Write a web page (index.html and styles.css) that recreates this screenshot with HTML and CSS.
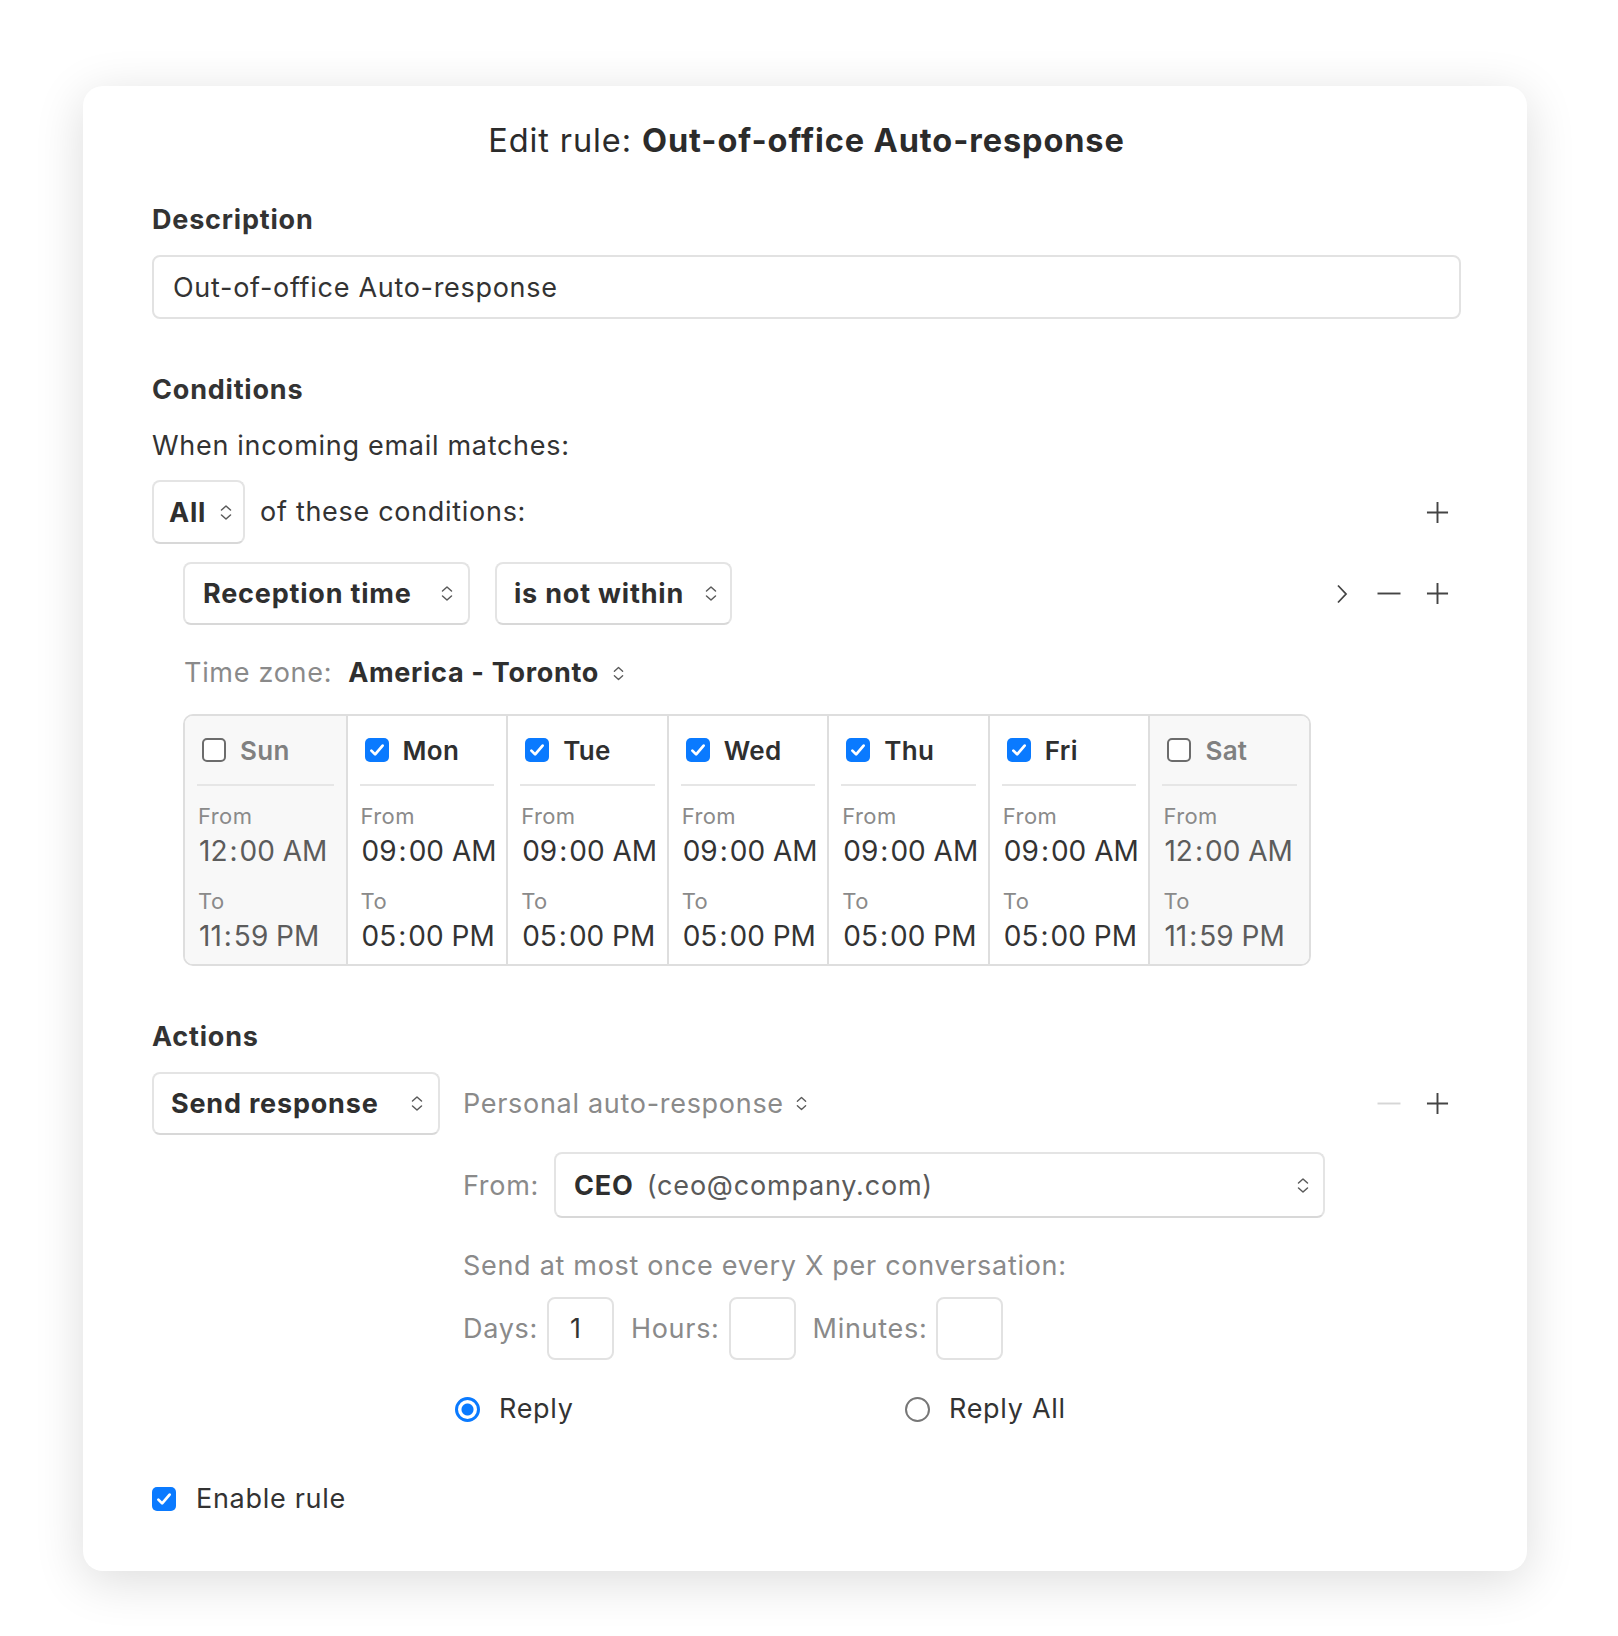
FILE: index.html
```html
<!DOCTYPE html>
<html>
<head>
    <meta charset="UTF-8">
    <title>Edit rule</title>
    <link rel="stylesheet" href="styles.css">
</head>
<body>
<div class="page">
    <div class="card">
        <h1 class="title">Edit rule: <b>Out-of-office Auto-response</b></h1>

        <div class="label first">Description</div>
        <div class="input">Out-of-office Auto-response</div>

        <div class="label section">Conditions</div>
        <div class="text when">When incoming email matches:</div>

        <div class="row match-row">
            <div class="select select-all">All
                <svg class="updown" viewBox="0 0 12 18"><path d="M1.5 6.5L6 2.5l4.5 4M1.5 11.5L6 15.5l4.5-4"/></svg>
            </div>
            <span class="text">of these conditions:</span>
            <span class="spacer"></span>
            <div class="tools">
                <svg class="icon plus" viewBox="0 0 24 24"><path d="M12 1v22M1 12h22"/></svg>
            </div>
        </div>

        <div class="row cond-row">
            <div class="select select-field">Reception time
                <svg class="updown" viewBox="0 0 12 18"><path d="M1.5 6.5L6 2.5l4.5 4M1.5 11.5L6 15.5l4.5-4"/></svg>
            </div>
            <div class="select select-op">is not within
                <svg class="updown" viewBox="0 0 12 18"><path d="M1.5 6.5L6 2.5l4.5 4M1.5 11.5L6 15.5l4.5-4"/></svg>
            </div>
            <span class="spacer"></span>
            <div class="tools">
                <svg class="icon chev" viewBox="0 0 12 20"><path d="M2 1.5l8 8.5-8 8.5"/></svg>
                <svg class="icon minus" viewBox="0 0 26 24"><path d="M1 12h24"/></svg>
                <svg class="icon plus" viewBox="0 0 24 24"><path d="M12 1v22M1 12h22"/></svg>
            </div>
        </div>

        <div class="tz">
            <span class="muted">Time zone:</span>
            <b>America - Toronto</b>
            <svg class="updown small" viewBox="0 0 12 18"><path d="M1.5 6.5L6 2.5l4.5 4M1.5 11.5L6 15.5l4.5-4"/></svg>
        </div>

        <div class="days">
            <div class="day off">
                <div class="day-head"><span class="check"></span>Sun</div>
                <div class="small-label">From</div>
                <div class="time">12<span class="colon">:</span>00 AM</div>
                <div class="small-label">To</div>
                <div class="time">11<span class="colon">:</span>59 PM</div>
            </div>
            <div class="day">
                <div class="day-head"><span class="check on"><svg viewBox="0 0 16 16"><path d="M3.5 8.5l3 3 6-7"/></svg></span>Mon</div>
                <div class="small-label">From</div>
                <div class="time">09<span class="colon">:</span>00 AM</div>
                <div class="small-label">To</div>
                <div class="time">05<span class="colon">:</span>00 PM</div>
            </div>
            <div class="day">
                <div class="day-head"><span class="check on"><svg viewBox="0 0 16 16"><path d="M3.5 8.5l3 3 6-7"/></svg></span>Tue</div>
                <div class="small-label">From</div>
                <div class="time">09<span class="colon">:</span>00 AM</div>
                <div class="small-label">To</div>
                <div class="time">05<span class="colon">:</span>00 PM</div>
            </div>
            <div class="day">
                <div class="day-head"><span class="check on"><svg viewBox="0 0 16 16"><path d="M3.5 8.5l3 3 6-7"/></svg></span>Wed</div>
                <div class="small-label">From</div>
                <div class="time">09<span class="colon">:</span>00 AM</div>
                <div class="small-label">To</div>
                <div class="time">05<span class="colon">:</span>00 PM</div>
            </div>
            <div class="day">
                <div class="day-head"><span class="check on"><svg viewBox="0 0 16 16"><path d="M3.5 8.5l3 3 6-7"/></svg></span>Thu</div>
                <div class="small-label">From</div>
                <div class="time">09<span class="colon">:</span>00 AM</div>
                <div class="small-label">To</div>
                <div class="time">05<span class="colon">:</span>00 PM</div>
            </div>
            <div class="day">
                <div class="day-head"><span class="check on"><svg viewBox="0 0 16 16"><path d="M3.5 8.5l3 3 6-7"/></svg></span>Fri</div>
                <div class="small-label">From</div>
                <div class="time">09<span class="colon">:</span>00 AM</div>
                <div class="small-label">To</div>
                <div class="time">05<span class="colon">:</span>00 PM</div>
            </div>
            <div class="day off">
                <div class="day-head"><span class="check"></span>Sat</div>
                <div class="small-label">From</div>
                <div class="time">12<span class="colon">:</span>00 AM</div>
                <div class="small-label">To</div>
                <div class="time">11<span class="colon">:</span>59 PM</div>
            </div>
        </div>

        <div class="label actions">Actions</div>
        <div class="row action-row">
            <div class="select select-action">Send response
                <svg class="updown" viewBox="0 0 12 18"><path d="M1.5 6.5L6 2.5l4.5 4M1.5 11.5L6 15.5l4.5-4"/></svg>
            </div>
            <span class="text muted template">Personal auto-response
                <svg class="updown small" viewBox="0 0 12 18"><path d="M1.5 6.5L6 2.5l4.5 4M1.5 11.5L6 15.5l4.5-4"/></svg>
            </span>
            <span class="spacer"></span>
            <div class="tools">
                <svg class="icon minus faded" viewBox="0 0 26 24"><path d="M1 12h24"/></svg>
                <svg class="icon plus" viewBox="0 0 24 24"><path d="M12 1v22M1 12h22"/></svg>
            </div>
        </div>

        <div class="response">
            <div class="from-row">
                <span class="muted">From:</span>
                <div class="select select-from">
                    <span><b>CEO</b> <span class="addr">(ceo@company.com)</span></span>
                    <svg class="updown" viewBox="0 0 12 18"><path d="M1.5 6.5L6 2.5l4.5 4M1.5 11.5L6 15.5l4.5-4"/></svg>
                </div>
            </div>
            <div class="muted limit">Send at most once every X per conversation:</div>
            <div class="interval">
                <span class="muted">Days:</span>
                <div class="num">1</div>
                <span class="muted">Hours:</span>
                <div class="num"></div>
                <span class="muted">Minutes:</span>
                <div class="num"></div>
            </div>
            <div class="radios">
                <label class="radio-item"><span class="radio on"></span>Reply</label>
                <label class="radio-item"><span class="radio"></span>Reply All</label>
            </div>
        </div>

        <div class="enable">
            <span class="check on"><svg viewBox="0 0 16 16"><path d="M3.5 8.5l3 3 6-7"/></svg></span>
            Enable rule
        </div>
    </div>
</div>
</body>
</html>
```

FILE: styles.css
```css
body {
    margin: 0;
    background: #fff;
    font-family: Inter, "Noto Sans", sans-serif;
    color: #333;
}
.page {
    padding: 86px 0 60px 83px;
}
.card {
    width: 1444px;
    box-sizing: border-box;
    padding: 35px 66px 56px 69px;
    background: #fff;
    border-radius: 20px;
    box-shadow: 0 10px 50px rgba(0,0,0,0.14);
}
.title {
    margin: 0;
    font-size: 32.5px;
    font-weight: 400;
    letter-spacing: 0.9px;
    line-height: 40px;
    text-align: center;
    color: #2b2b2b;
}
.title b {
    font-weight: 700;
}
.label {
    font-size: 27px;
    font-weight: 700;
    letter-spacing: 0.8px;
    line-height: 32px;
    color: #333;
}
.label.first {
    margin-top: 43px;
}
.label.section {
    margin-top: 55px;
}
.label.actions {
    margin-top: 55px;
}
.input {
    margin-top: 19px;
    height: 64px;
    box-sizing: border-box;
    border: 2px solid #e2e2e2;
    border-radius: 8px;
    padding: 0 19px;
    display: flex;
    align-items: center;
    font-size: 27px;
    letter-spacing: 0.7px;
    color: #333;
}
.text {
    font-size: 27px;
    letter-spacing: 0.7px;
    line-height: 32px;
    color: #333;
}
.when {
    margin-top: 24px;
}
.muted {
    color: #8a8a8a;
}
.row {
    display: flex;
    align-items: center;
}
.spacer {
    flex: 1;
}
.match-row {
    margin-top: 18px;
    height: 64px;
    gap: 15px;
}
.cond-row {
    margin-top: 18px;
    height: 63px;
    gap: 25px;
    padding-left: 31px;
}
.select {
    height: 100%;
    box-sizing: border-box;
    border: 2px solid #e4e4e4;
    border-bottom-color: #d8d8d8;
    border-radius: 8px;
    display: flex;
    align-items: center;
    justify-content: space-between;
    padding: 0 16px 0 17px;
    font-size: 27px;
    font-weight: 700;
    letter-spacing: 0.8px;
    color: #2f2f2f;
    background: #fff;
}
.select-all {
    width: 93px;
    padding-left: 15px;
    padding-right: 11px;
}
.select-field {
    width: 287px;
    padding-left: 18px;
    padding-right: 15px;
}
.select-op {
    width: 237px;
    padding-left: 17px;
    padding-right: 13px;
}
.select-action {
    width: 288px;
    padding-right: 15px;
}
.updown {
    width: 12px;
    height: 19px;
    flex: none;
    fill: none;
    stroke: #5a5a5a;
    stroke-width: 1.5;
    stroke-linecap: round;
    stroke-linejoin: round;
}
.updown.small {
    width: 11px;
    height: 17px;
}
.tools {
    display: flex;
    align-items: center;
    gap: 24px;
    margin-right: 12px;
}
.icon {
    fill: none;
    stroke: #444;
    stroke-width: 2;
}
.icon.plus {
    width: 23px;
    height: 23px;
}
.icon.minus {
    width: 26px;
    height: 23px;
}
.icon.chev {
    width: 12px;
    height: 20px;
    stroke-width: 1.8;
    margin-right: 4px;
}
.icon.faded {
    stroke: #d6d6d6;
}
.tz {
    margin-top: 32px;
    padding-left: 32px;
    font-size: 27px;
    letter-spacing: 0.7px;
    line-height: 32px;
    display: flex;
    align-items: center;
    gap: 16px;
}
.tz b {
    font-weight: 700;
    color: #2f2f2f;
}
.tz .updown {
    margin-left: -2px;
}
.days {
    margin: 25px 0 0 31px;
    width: 1128px;
    display: grid;
    grid-template-columns: repeat(7, minmax(0, 1fr));
    border: 2px solid #dedede;
    border-radius: 10px;
    overflow: hidden;
    box-sizing: border-box;
}
.day {
    padding: 0 12px 8px 12px;
    border-left: 2px solid #dedede;
    background: #fff;
}
.day:first-child {
    border-left: none;
}
.day.off {
    background: #f8f8f8;
}
.day-head {
    height: 68px;
    display: flex;
    align-items: center;
    gap: 14px;
    padding-left: 5px;
    border-bottom: 2px solid #e6e6e6;
    font-size: 26px;
    font-weight: 600;
    letter-spacing: 0.3px;
    color: #2f2f2f;
}
.day.off .day-head {
    color: #808080;
}
.check {
    width: 24px;
    height: 24px;
    box-sizing: border-box;
    border: 2px solid #6c6c6c;
    border-radius: 5px;
    background: #fff;
    display: inline-flex;
    align-items: center;
    justify-content: center;
    flex: none;
}
.check.on {
    border: none;
    background: #0a7aff;
}
.check svg {
    width: 20px;
    height: 20px;
    fill: none;
    stroke: #fff;
    stroke-width: 2.2;
    stroke-linecap: round;
    stroke-linejoin: round;
}
.small-label {
    margin-top: 17px;
    font-size: 22px;
    letter-spacing: 0.4px;
    line-height: 26px;
    color: #8a8a8a;
    padding-left: 1px;
}
.time {
    margin-top: 2px;
    font-size: 28px;
    line-height: 40px;
    color: #333;
    padding-left: 2px;
    white-space: nowrap;
}
.day.off .time {
    color: #5c5c5c;
}
.colon {
    margin: 0 2px;
}
.action-row {
    margin-top: 19px;
    height: 63px;
    gap: 23px;
}
.template {
    display: flex;
    align-items: center;
    gap: 12px;
}
.response {
    margin-left: 311px;
}
.from-row {
    margin-top: 17px;
    height: 66px;
    display: flex;
    align-items: center;
    gap: 15px;
    font-size: 27px;
    letter-spacing: 0.7px;
}
.select-from {
    width: 771px;
    padding-left: 18px;
    padding-right: 14px;
}
.select-from b {
    font-weight: 700;
}
.addr {
    font-weight: 400;
    color: #5a5a5a;
    margin-left: 6px;
}
.limit {
    margin-top: 32px;
    font-size: 27px;
    letter-spacing: 0.7px;
    line-height: 32px;
}
.interval {
    margin-top: 15px;
    height: 63px;
    display: flex;
    align-items: center;
    font-size: 27px;
    letter-spacing: 0.7px;
}
.num {
    width: 67px;
    height: 63px;
    box-sizing: border-box;
    border: 2px solid #e2e2e2;
    border-radius: 8px;
    margin: 0 17px 0 9px;
    padding-left: 21px;
    display: flex;
    align-items: center;
    color: #333;
}
.radios {
    margin: 33px 0 0 -8px;
    display: flex;
    font-size: 27px;
    letter-spacing: 0.7px;
    line-height: 32px;
}
.radio-item {
    width: 450px;
    display: flex;
    align-items: center;
    gap: 19px;
}
.radio {
    width: 25px;
    height: 25px;
    box-sizing: border-box;
    border-radius: 50%;
    border: 2px solid #777;
    background: #fff;
    flex: none;
}
.radio.on {
    border: 3px solid #0a7aff;
    background: radial-gradient(circle, #0a7aff 0 5.5px, #fff 6.5px);
}
.enable {
    margin-top: 58px;
    display: flex;
    align-items: center;
    gap: 20px;
    font-size: 27px;
    letter-spacing: 0.7px;
    line-height: 32px;
}
```
